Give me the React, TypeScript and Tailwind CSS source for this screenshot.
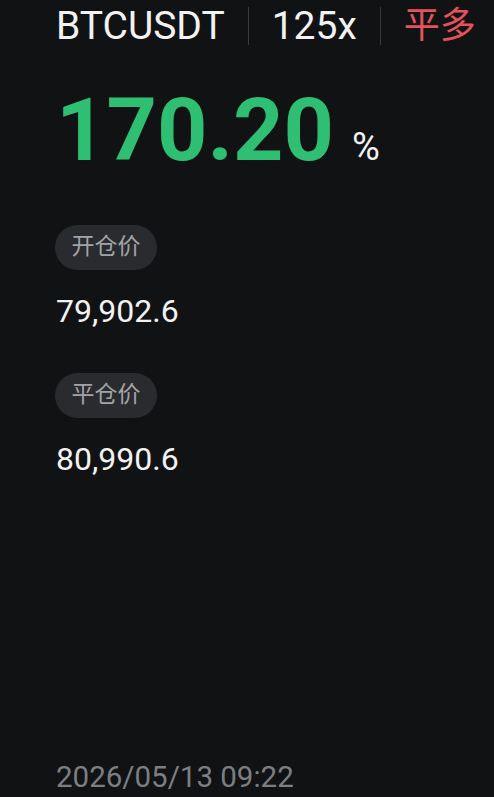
import React from "react";

interface PriceRow {
  label: string;
  value: string;
}

const rows: PriceRow[] = [
  { label: "开仓价", value: "79,902.6" },
  { label: "平仓价", value: "80,990.6" },
];

const font = "font-['Roboto','Noto_Sans_CJK_SC',sans-serif]";

const App: React.FC = () => {
  return (
    <div
      className={`${font} bg-[#111214] w-[494px] min-h-[797px] flex flex-col pl-[56px] text-[#f2f2f2]`}
    >
      {/* header */}
      <div className="flex items-center gap-[23px] h-[52px] text-[39px] leading-[52px]">
        <span>BTCUSDT</span>
        <span className="w-px h-[38px] bg-[#3a3b3e]" />
        <span>125x</span>
        <span className="w-px h-[38px] bg-[#3a3b3e]" />
        <span className="text-[36px] text-[#e4535c]">平多</span>
      </div>

      {/* pnl */}
      <div className="mt-[28px] flex items-baseline h-[100px]">
        <span className="text-[88px] leading-[100px] font-bold text-[#2fbf72]">170.20</span>
        <span className="ml-[18px] text-[38px] leading-[40px]">%</span>
      </div>

      {rows.map((row, i) => (
        <div key={row.label} className={i === 0 ? "mt-[45px]" : "mt-[42px]"}>
          <div className="-ml-px w-[102px] h-[45px] rounded-full bg-[#2a2b2e] flex items-center justify-center text-[23px] text-[#a3a4a7]">
            {row.label}
          </div>
          <div className="mt-[21px] text-[32px] leading-[40px]">{row.value}</div>
        </div>
      ))}

      <div className="mt-auto pb-[2px] text-[29.5px] leading-[36px] text-[#7c7e82]">
        2026/05/13 09:22
      </div>
    </div>
  );
};

export default App;
